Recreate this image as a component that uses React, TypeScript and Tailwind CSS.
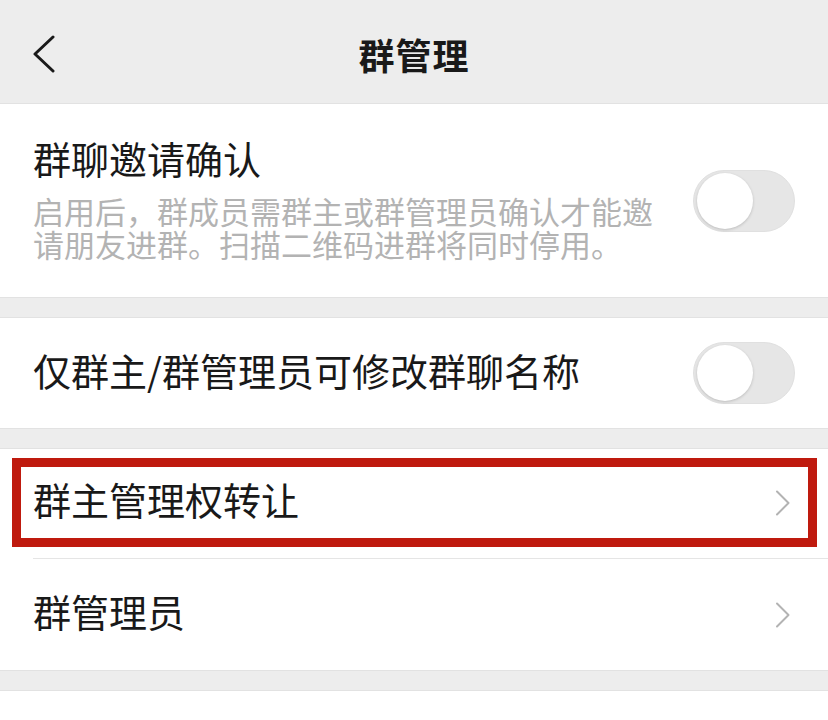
import React from "react";

const font = { fontFamily: '"Noto Sans CJK SC", "Noto Sans", sans-serif' };

function Toggle() {
  return (
    <div className="w-[102px] h-[62px] rounded-full bg-[#e6e6e6] border border-[#e0e0e0] flex items-center pl-[3px] shrink-0">
      <div className="w-[56px] h-[56px] rounded-full bg-white shadow-[0_1px_3px_rgba(0,0,0,0.18)]" />
    </div>
  );
}

function Chevron() {
  return (
    <svg width="16" height="26" viewBox="0 0 16 26" className="shrink-0">
      <path d="M2 1.5 L13.5 13 L2 24.5" fill="none" stroke="#b3b3b3" strokeWidth="2" strokeLinecap="round" strokeLinejoin="round" />
    </svg>
  );
}

export default function App() {
  return (
    <div className="w-[828px] h-[720px] overflow-hidden bg-[#ededed] text-[#191919]" style={font}>
      <div className="h-[104px] pt-[5px] grid grid-cols-[1fr_auto_1fr] items-center border-b border-[#e2e2e2]">
        <div className="pl-[32px] flex items-center">
          <svg width="24" height="38" viewBox="0 0 24 38">
            <path d="M21 2 L3 19 L21 36" fill="none" stroke="#1a1a1a" strokeWidth="3" strokeLinecap="round" strokeLinejoin="round" />
          </svg>
        </div>
        <div className="text-[36px] font-bold leading-none tracking-[1px]">群管理</div>
        <div />
      </div>

      <div className="bg-white h-[194px] px-[33px] flex items-center justify-between border-b border-[#e2e2e2]">
        <div className="flex flex-col">
          <div className="text-[38px] leading-[32px]">群聊邀请确认</div>
          <div className="text-[31px] leading-[33px] text-[#b3b3b3] mt-[20px] w-[630px]">
            启用后，群成员需群主或群管理员确认才能邀请朋友进群。扫描二维码进群将同时停用。
          </div>
        </div>
        <Toggle />
      </div>

      <div className="h-[19px]" />

      <div className="bg-white h-[112px] px-[33px] flex items-center justify-between border-y border-[#e2e2e2]">
        <div className="text-[38px] leading-none mb-[7px]">仅群主/群管理员可修改群聊名称</div>
        <Toggle />
      </div>

      <div className="h-[19px]" />

      <div className="bg-white border-y border-[#e2e2e2]">
        <div className="pt-[9px] pb-[11px] pl-[12px] pr-[11px]">
          <div className="h-[89px] border-[9px] border-[#bf1a0e] flex items-center justify-between pl-[12px] pr-[17px]">
            <div className="text-[38px] leading-none mb-[8px]">群主管理权转让</div>
            <Chevron />
          </div>
        </div>
        <div className="ml-[33px] h-px bg-[#e5e5e5]" />
        <div className="h-[111px] pl-[33px] pr-[37px] flex items-center justify-between">
          <div className="text-[38px] leading-none mb-[7px]">群管理员</div>
          <Chevron />
        </div>
      </div>

      <div className="h-[19px]" />
      <div className="bg-white h-[40px] border-t border-[#e2e2e2]" />
    </div>
  );
}
